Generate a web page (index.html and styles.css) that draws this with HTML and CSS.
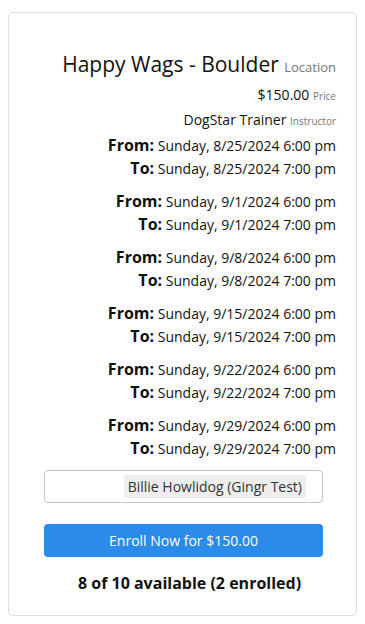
FILE: index.html
```html
<!DOCTYPE html>
<html lang="en">
<head>
    <meta charset="UTF-8">
    <meta name="viewport" content="width=device-width, initial-scale=1.0">
    <title>Happy Wags - Boulder</title>
    <link rel="stylesheet" href="styles.css">
</head>
<body>
    <div class="card">
        <div class="details">
            <h2 class="title">Happy Wags - Boulder <small>Location</small></h2>
            <p class="meta">$150.00 <small>Price</small></p>
            <p class="meta">DogStar Trainer <small>Instructor</small></p>
        </div>

        <div class="sessions">
            <div class="session">
                <p><b>From:</b> Sunday, 8/25/2024 6:00 pm</p>
                <p><b>To:</b> Sunday, 8/25/2024 7:00 pm</p>
            </div>
            <div class="session">
                <p><b>From:</b> Sunday, 9/1/2024 6:00 pm</p>
                <p><b>To:</b> Sunday, 9/1/2024 7:00 pm</p>
            </div>
            <div class="session">
                <p><b>From:</b> Sunday, 9/8/2024 6:00 pm</p>
                <p><b>To:</b> Sunday, 9/8/2024 7:00 pm</p>
            </div>
            <div class="session">
                <p><b>From:</b> Sunday, 9/15/2024 6:00 pm</p>
                <p><b>To:</b> Sunday, 9/15/2024 7:00 pm</p>
            </div>
            <div class="session">
                <p><b>From:</b> Sunday, 9/22/2024 6:00 pm</p>
                <p><b>To:</b> Sunday, 9/22/2024 7:00 pm</p>
            </div>
            <div class="session">
                <p><b>From:</b> Sunday, 9/29/2024 6:00 pm</p>
                <p><b>To:</b> Sunday, 9/29/2024 7:00 pm</p>
            </div>
        </div>

        <div class="pet-select">
            <span class="chip">Billie Howlidog (Gingr Test)</span>
        </div>

        <button class="enroll">Enroll Now for $150.00</button>

        <p class="availability">8 of 10 available (2 enrolled)</p>
    </div>
</body>
</html>
```

FILE: styles.css
```css
body {
    font-family: 'Open Sans', sans-serif;
    margin: 12px 8px;
    color: #111;
    background: #fff;
}
.card {
    border: 1px solid #ddd;
    border-radius: 5px;
    padding: 37px 20px 22px 34px;
}
.details {
    text-align: right;
}
.title {
    font-size: 21px;
    font-weight: 400;
    margin: 0 0 2px;
    line-height: 28px;
}
.title small, .meta small {
    font-size: 13px;
    color: #777;
}
.meta {
    font-size: 14px;
    margin: 0;
    line-height: 24px;
}
.meta small {
    font-size: 10px;
}
.sessions {
    display: flex;
    flex-direction: column;
    gap: 10px;
    margin-top: 1px;
}
.session {
    text-align: right;
}
.session p {
    margin: 0;
    font-size: 14px;
    line-height: 23px;
}
.session b {
    font-size: 16px;
    font-weight: 700;
}
.pet-select {
    margin: 10px 0 0 1px;
    width: 279px;
    height: 33px;
    box-sizing: border-box;
    border: 1px solid #c4c4c4;
    border-radius: 4px;
    display: flex;
    align-items: center;
    justify-content: flex-end;
    padding-right: 16px;
}
.chip {
    background: #eee;
    border-radius: 2px;
    padding: 2px 4px;
    font-size: 14px;
    color: #333;
}
.enroll {
    display: block;
    margin: 21px 0 0 1px;
    width: 279px;
    height: 33px;
    border: none;
    border-radius: 4px;
    background: #2a8be8;
    color: #fff;
    font-family: 'Open Sans', sans-serif;
    font-size: 14px;
}
.availability {
    text-align: center;
    font-weight: 700;
    font-size: 16px;
    line-height: 20px;
    margin: 16px 0 0;
}
```
